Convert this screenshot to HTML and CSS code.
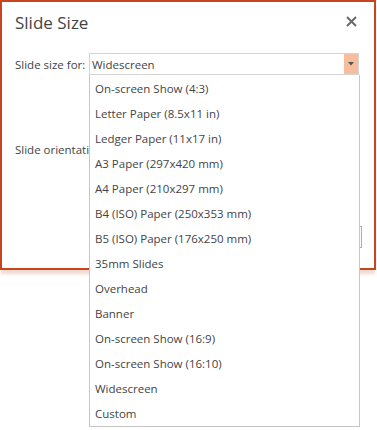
FILE: index.html
```html
<!DOCTYPE html>
<html>
<head>
<meta charset="utf-8">
<link rel="stylesheet" href="styles.css">
</head>
<body>
<div class="dialog">
  <div class="header">
    <div class="title">Slide Size</div>
    <div class="close"><svg width="11" height="11" viewBox="0 0 11 11"><path d="M1 1L10 10M10 1L1 10" stroke="#6a6a6a" stroke-width="2"/></svg></div>
  </div>
  <div class="row size-row">
    <span class="label">Slide size for:</span>
    <div class="select">
      <span class="value">Widescreen</span>
      <span class="arrow"><svg width="6" height="4" viewBox="0 0 6 4"><path d="M0 0H6L3 3.5Z" fill="#555"/></svg></span>
    </div>
  </div>
  <div class="row orient-row">
    <span class="label">Slide orientation</span>
  </div>
  <div class="buttons">
    <span class="btn"></span>
    <span class="btn"></span>
  </div>
</div>
<ul class="menu">
  <li>On-screen Show (4:3)</li>
  <li>Letter Paper (8.5x11 in)</li>
  <li>Ledger Paper (11x17 in)</li>
  <li>A3 Paper (297x420 mm)</li>
  <li>A4 Paper (210x297 mm)</li>
  <li>B4 (ISO) Paper (250x353 mm)</li>
  <li>B5 (ISO) Paper (176x250 mm)</li>
  <li>35mm Slides</li>
  <li>Overhead</li>
  <li>Banner</li>
  <li>On-screen Show (16:9)</li>
  <li>On-screen Show (16:10)</li>
  <li>Widescreen</li>
  <li>Custom</li>
</ul>
</body>
</html>
```
FILE: styles.css
```css
html, body {
  margin: 0;
  padding: 0;
  background: #fff;
}
body {
  position: relative;
  width: 377px;
  height: 430px;
  overflow: hidden;
  font-family: "Open Sans", "Noto Sans", sans-serif;
  font-size: 11.5px;
  color: #444;
}
.dialog {
  box-sizing: border-box;
  width: 376px;
  height: 270px;
  border: 2px solid #c8441f;
  background: #fff;
  box-shadow: 0 5px 3px -1px rgba(200, 120, 90, 0.28);
  display: flex;
  flex-direction: column;
}
.header {
  display: flex;
  justify-content: space-between;
  align-items: center;
  height: 38px;
  padding: 0 17px 0 13px;
}
.title {
  font-size: 17px;
  color: #444;
  padding-top: 2px;
}
.close {
  display: flex;
  align-items: center;
  padding-top: 1px;
}
.row {
  display: flex;
  align-items: center;
  padding-left: 13px;
}
.size-row {
  margin-top: 13px;
}
.label {
  width: 74px;
  white-space: nowrap;
}
.select {
  box-sizing: border-box;
  width: 270px;
  height: 22px;
  border: 1px solid #d4d4d4;
  display: flex;
  align-items: center;
  justify-content: space-between;
}
.value {
  padding-left: 2px;
}
.arrow {
  width: 14px;
  height: 20px;
  background: #f6bd9f;
  display: flex;
  align-items: center;
  justify-content: center;
}
.orient-row {
  margin-top: 67px;
}
.buttons {
  display: flex;
  justify-content: flex-end;
  gap: 8px;
  padding-right: 12px;
  margin-top: 69px;
}
.btn {
  box-sizing: border-box;
  width: 72px;
  height: 22px;
  border: 1px solid #adadad;
  background: #fdfdfd;
}
.menu {
  position: absolute;
  left: 89px;
  top: 75px;
  box-sizing: border-box;
  width: 271px;
  height: 352px;
  margin: 0;
  padding: 1px 0;
  list-style: none;
  background: #fff;
  border: 1px solid #c6c6c6;
  border-top: none;
}
.menu li {
  height: 25px;
  line-height: 25px;
  padding-left: 5px;
  white-space: nowrap;
}
```
